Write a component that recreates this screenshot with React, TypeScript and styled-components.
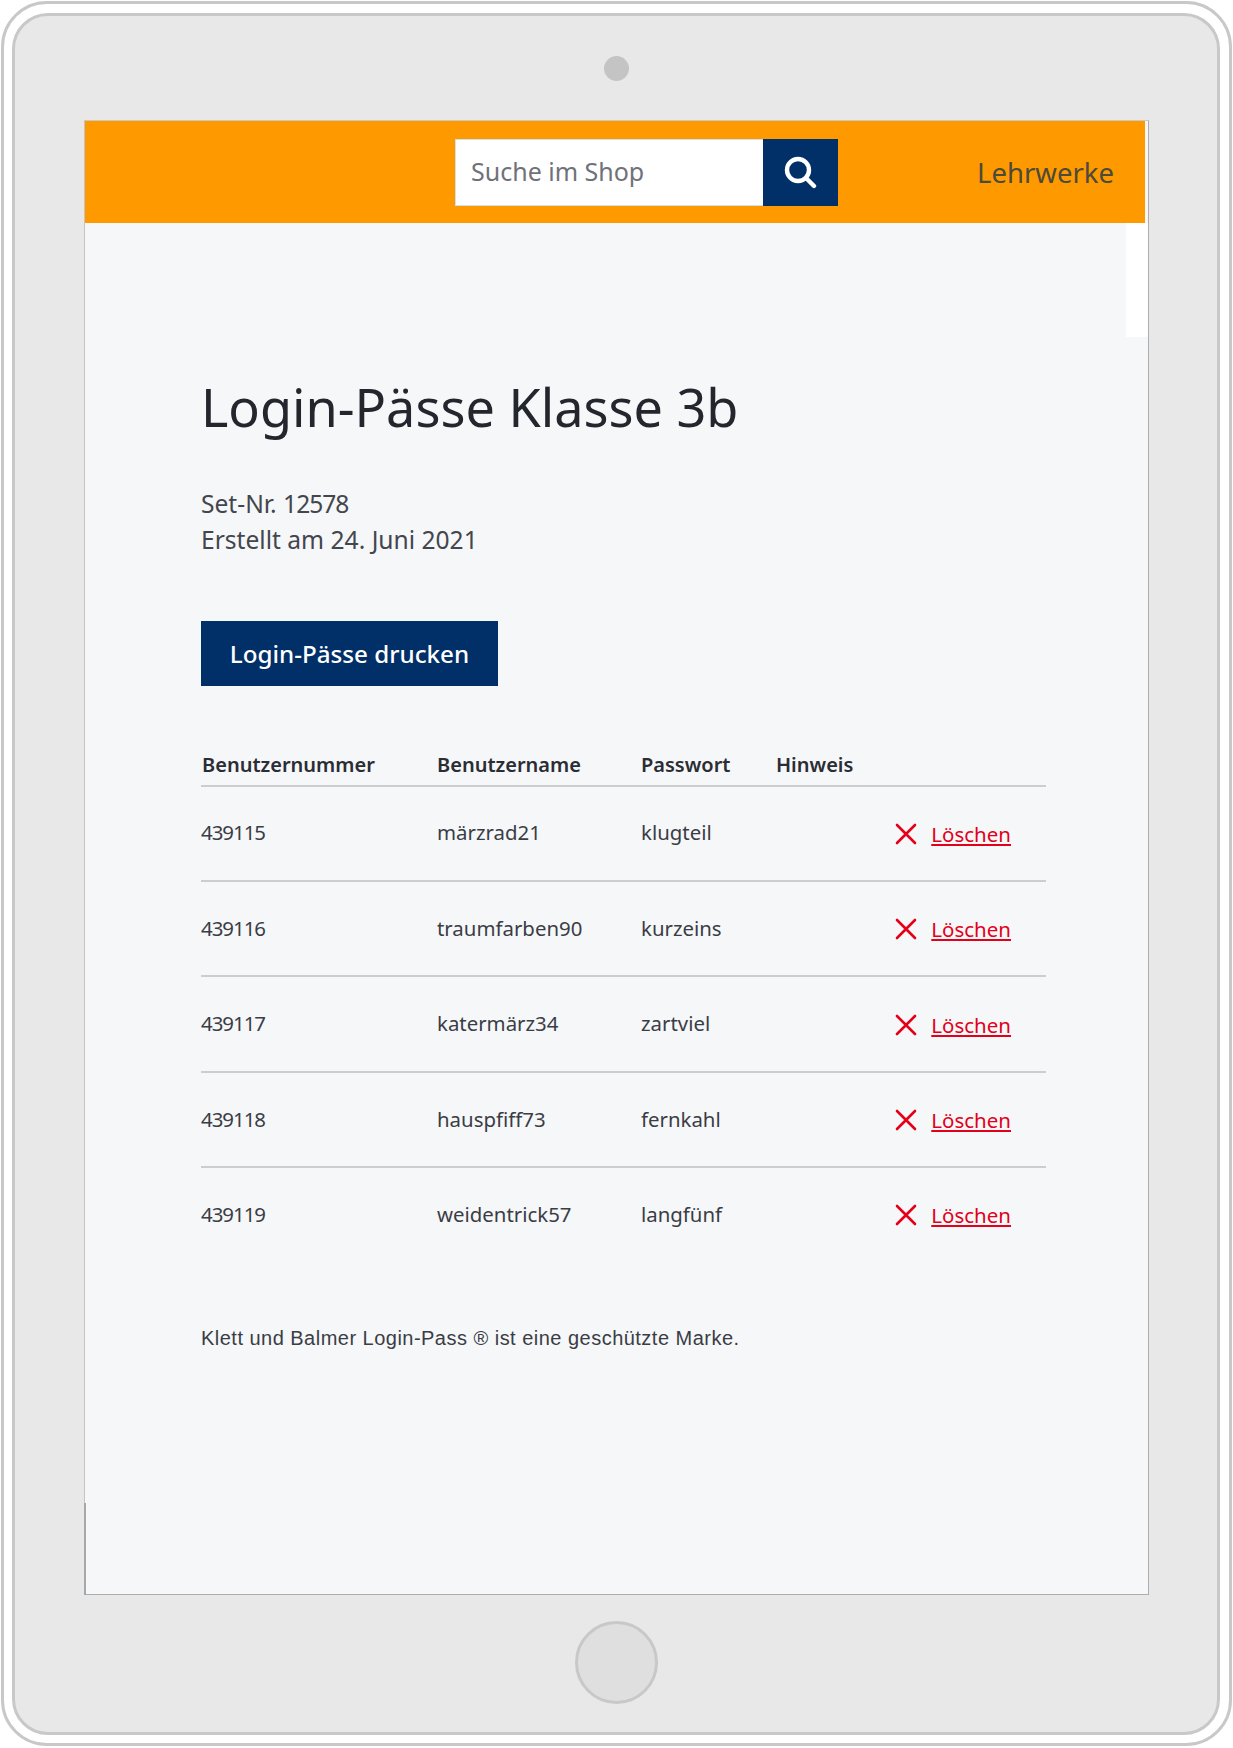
import React from 'react'
import styled, { createGlobalStyle } from 'styled-components'

const GlobalStyle = createGlobalStyle`
  html, body {
    margin: 0;
    padding: 0;
    background: #fff;
  }
  * {
    box-sizing: border-box;
  }
`

const Page = styled.div`
  width: 1233px;
  height: 1748px;
  padding: 1px 1px 2px 1px;
  font-family: 'Noto Sans', sans-serif;
`

const Shell = styled.div`
  height: 100%;
  padding: 9px 9px 8px 8px;
  background: #fff;
  border: 3px solid #c8c8c8;
  border-radius: 46px;
`

const Bezel = styled.div`
  height: 100%;
  display: flex;
  flex-direction: column;
  align-items: center;
  background: #e8e8e8;
  border: 3px solid #c8c8c8;
  border-radius: 36px;
`

const Camera = styled.div`
  flex: none;
  width: 25px;
  height: 25px;
  margin: 40px 0 39px 0;
  border-radius: 50%;
  background: #c4c4c4;
`

const Screen = styled.div`
  position: relative;
  flex: none;
  width: 1065px;
  height: 1475px;
  margin-left: 1px;
  background: #f6f7f9;
  border: 1px solid #adadad;
  border-top-color: #cfc8c0;
  border-left-color: #c4c4c4;
`

const WhiteStrip = styled.div`
  position: absolute;
  top: 102px;
  right: 0;
  width: 22px;
  height: 114px;
  background: #fff;
`

const LeftEdge = styled.div`
  position: absolute;
  left: -1px;
  bottom: -1px;
  width: 2px;
  height: 92px;
  background: #a8a8a8;
`

const Header = styled.header`
  display: flex;
  align-items: center;
  width: 1060px;
  height: 102px;
  padding-left: 370px;
  background: #ff9900;
`

const Search = styled.form`
  display: flex;
  align-items: stretch;
  height: 67px;
`

const SearchInput = styled.input`
  width: 308px;
  margin: 0;
  padding: 0 15px 2px 15px;
  border: 1px solid #cfe0ee;
  border-right: none;
  border-radius: 0;
  outline: none;
  background: #fff;
  font-family: 'Noto Sans', sans-serif;
  font-size: 25px;
  color: #6f7278;

  &::placeholder {
    color: #6f7278;
    opacity: 1;
  }
`

const SearchButton = styled.button`
  display: flex;
  align-items: center;
  justify-content: center;
  width: 75px;
  padding: 0 2px 0 0;
  border: none;
  border-radius: 0;
  background: #003067;
`

const NavLink = styled.a`
  margin-left: auto;
  margin-right: 31px;
  font-size: 27.5px;
  color: #4c4a3a;
`

const Content = styled.main`
  display: flex;
  flex-direction: column;
  align-items: flex-start;
  padding: 0 100px 0 116px;
`

const Title = styled.h1`
  margin: 149.5px 0 0 0;
  font-size: 52.2px;
  line-height: 68px;
  font-weight: 400;
  color: #23262d;
`

const Meta = styled.p`
  margin: 45px 0 0 0;
  font-size: 24.6px;
  line-height: 36px;
  color: #43464d;
`

const SetNumber = styled.span`
  letter-spacing: -1px;
`

const PrintButton = styled.button`
  margin: 63px 0 0 0;
  width: 297px;
  height: 65px;
  padding: 0;
  border: none;
  border-radius: 0;
  background: #003067;
  font-family: 'Noto Sans', sans-serif;
  font-size: 24.2px;
  font-weight: 500;
  color: #fff;
`

const Table = styled.div`
  width: 845px;
  margin-top: 65.5px;
`

const HeadRow = styled.div`
  display: grid;
  grid-template-columns: 236px 204px 135px 1fr;
  height: 35.7px;
  border-bottom: 2px solid #cccdd0;
  font-size: 20px;
  line-height: 28px;
  font-weight: 600;
  color: #2a2d34;

  span:first-child {
    padding-left: 1px;
  }
`

const Row = styled.div<{ $last?: boolean }>`
  display: grid;
  grid-template-columns: 236px 204px 135px 1fr;
  align-items: center;
  height: 95.4px;
  padding-bottom: 2px;
  border-bottom: 2px solid ${({ $last }) => ($last ? 'transparent' : '#cccdd0')};
  font-size: 20.4px;
  color: #3a3d45;
`

const UserId = styled.span`
  letter-spacing: -1px;
`

const Actions = styled.div`
  display: flex;
  align-items: center;
  justify-content: flex-end;
  gap: 14px;
  padding: 3px 35px 0 0;
`

const DeleteLink = styled.a`
  font-size: 20.5px;
  color: #e2001a;
  text-decoration: underline;
`

const Footnote = styled.p`
  margin: 60.5px 0 0 0;
  font-family: 'Liberation Sans', Arial, sans-serif;
  font-size: 20px;
  line-height: 28px;
  letter-spacing: 0.48px;
  color: #3a3d45;
`

const HomeButton = styled.div`
  flex: none;
  width: 83px;
  height: 83px;
  margin-top: 26px;
  border: 3px solid #c8c8c8;
  border-radius: 50%;
  background: #dfdfdf;
`

const users = [
  { id: '439115', name: 'märzrad21', password: 'klugteil' },
  { id: '439116', name: 'traumfarben90', password: 'kurzeins' },
  { id: '439117', name: 'katermärz34', password: 'zartviel' },
  { id: '439118', name: 'hauspfiff73', password: 'fernkahl' },
  { id: '439119', name: 'weidentrick57', password: 'langfünf' },
]

const SearchIcon = () => (
  <svg width="34" height="34" viewBox="0 0 34 34" fill="none" stroke="#fff" strokeWidth="4.4">
    <circle cx="15" cy="15" r="11" />
    <path d="M23 23l8 8" strokeLinecap="round" />
  </svg>
)

const DeleteIcon = () => (
  <svg width="22" height="22" viewBox="0 0 22 22" fill="none" stroke="#e2001a" strokeWidth="2.6" strokeLinecap="round">
    <path d="M2 2l18 18M20 2L2 20" />
  </svg>
)

const App = () => {
  return (
    <Page>
      <GlobalStyle />
      <Shell>
        <Bezel>
          <Camera />
          <Screen>
            <Header>
              <Search onSubmit={(event) => event.preventDefault()}>
                <SearchInput placeholder="Suche im Shop" />
                <SearchButton aria-label="Suchen">
                  <SearchIcon />
                </SearchButton>
              </Search>
              <NavLink>Lehrwerke</NavLink>
            </Header>
            <WhiteStrip />
            <LeftEdge />
            <Content>
              <Title>Login-Pässe Klasse 3b</Title>
              <Meta>
                Set-Nr. <SetNumber>12578</SetNumber>
                <br />
                Erstellt am 24. Juni 2021
              </Meta>
              <PrintButton>Login-Pässe drucken</PrintButton>
              <Table>
                <HeadRow>
                  <span>Benutzernummer</span>
                  <span>Benutzername</span>
                  <span>Passwort</span>
                  <span>Hinweis</span>
                </HeadRow>
                {users.map((user, index) => (
                  <Row key={user.id} $last={index === users.length - 1}>
                    <UserId>{user.id}</UserId>
                    <span>{user.name}</span>
                    <span>{user.password}</span>
                    <Actions>
                      <DeleteIcon />
                      <DeleteLink href="#">Löschen</DeleteLink>
                    </Actions>
                  </Row>
                ))}
              </Table>
              <Footnote>Klett und Balmer Login-Pass ® ist eine geschützte Marke.</Footnote>
            </Content>
          </Screen>
          <HomeButton />
        </Bezel>
      </Shell>
    </Page>
  )
}

export default App
